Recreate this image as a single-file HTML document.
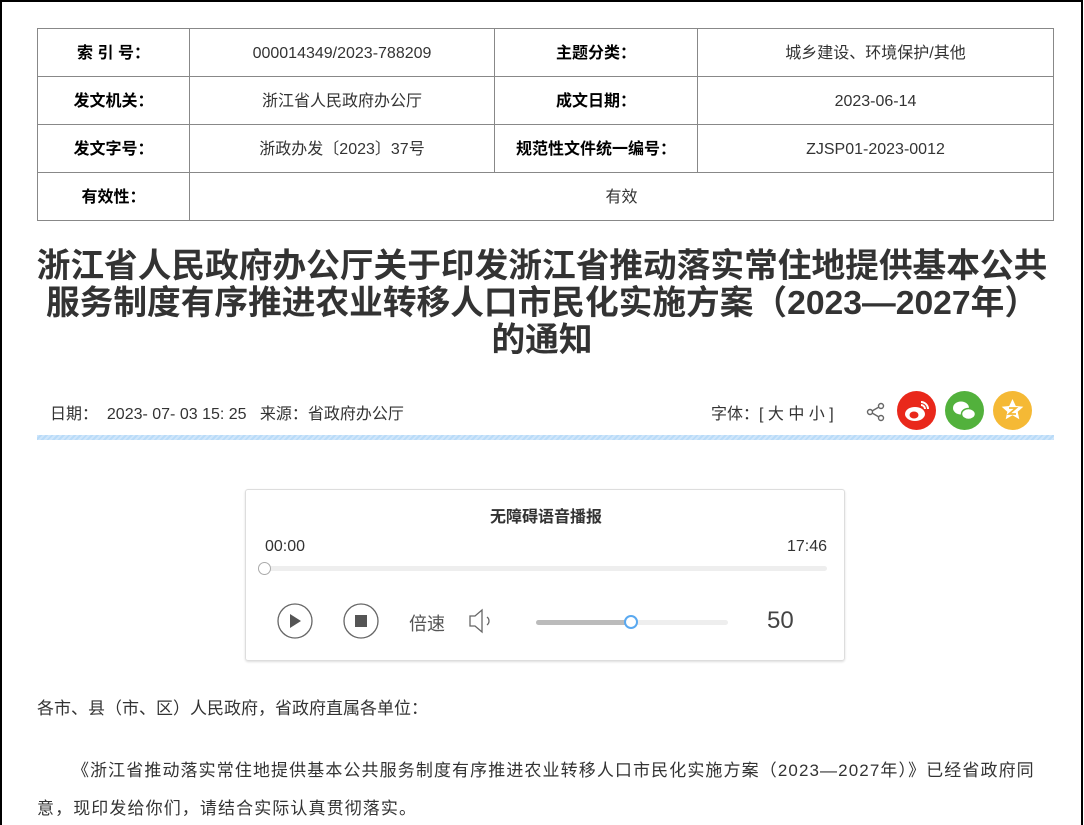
<!DOCTYPE html>
<html><head><meta charset="utf-8"><style>
*{margin:0;padding:0;box-sizing:border-box}
html,body{width:1084px;height:825px;overflow:hidden}
body{background:#fff;font-family:"Liberation Sans","Noto Sans CJK SC",sans-serif;color:#333;position:relative}
.frame{position:absolute;left:0;top:0;width:1083px;height:825px;border:2px solid #000;border-bottom:none}
table{position:absolute;left:37px;top:28px;width:1017px;border-collapse:collapse;font-size:16px}
td{border:1px solid #888;height:48px;text-align:center;vertical-align:middle;line-height:20px;color:#333;padding:3px 0 0}
td.b{font-weight:bold;color:#000}
h1{position:absolute;left:0;width:1084px;top:248px;text-align:center;font-size:33.7px;line-height:37px;font-weight:bold;color:#333;white-space:nowrap}
.meta{position:absolute;top:400px;left:50px;font-size:16px;color:#333}
.font{position:absolute;top:400px;left:711px;font-size:16px;color:#333}
.bar{position:absolute;left:37px;top:435px;width:1017px;height:5px;background:repeating-linear-gradient(135deg,#cfe6fb 0 2px,#b9dbf8 2px 4px)}
.ic{position:absolute;top:391px;width:39px;height:39px;border-radius:50%}
.player{position:absolute;left:245px;top:489px;width:600px;height:172px;border:1px solid #ddd;border-radius:3px;box-shadow:0 1px 2px #ddd}
.p{position:absolute;font-size:16px;color:#333}
.txt{position:absolute;left:37px;font-size:17px;color:#333;white-space:nowrap}
</style></head><body>
<div class="frame"></div>
<table>
<tr><td class="b" style="width:152px">索 引 号：</td><td style="width:305px">000014349/2023-788209</td><td class="b" style="width:203px">主题分类：</td><td>城乡建设、环境保护/其他</td></tr>
<tr><td class="b">发文机关：</td><td>浙江省人民政府办公厅</td><td class="b">成文日期：</td><td>2023-06-14</td></tr>
<tr><td class="b">发文字号：</td><td>浙政办发〔2023〕37号</td><td class="b">规范性文件统一编号：</td><td>ZJSP01-2023-0012</td></tr>
<tr><td class="b">有效性：</td><td colspan="3">有效</td></tr>
</table>
<h1>浙江省人民政府办公厅关于印发浙江省推动落实常住地提供基本公共<br>服务制度有序推进农业转移人口市民化实施方案（2023—2027年）<br>的通知</h1>
<div class="meta">日期：&nbsp; 2023- 07- 03 15: 25&nbsp;&nbsp; 来源：省政府办公厅</div>
<div class="font">字体：[ 大 中 小 ]</div>
<svg style="position:absolute;left:866px;top:402px" width="20" height="20" viewBox="0 0 20 20" fill="none" stroke="#666" stroke-width="1.4"><circle cx="15" cy="4" r="2.5"/><circle cx="4" cy="10" r="2.5"/><circle cx="15" cy="16" r="2.5"/><path d="M6 9 13 5M6 11 13 15"/></svg>
<div class="ic" style="left:897px;background:#e9281b"><svg width="39" height="39" viewBox="0 0 39 39"><ellipse cx="18" cy="23" rx="10" ry="7" fill="#fff"/><ellipse cx="17" cy="24" rx="4.5" ry="3.5" fill="#e9281b"/><path d="M24 11a7 7 0 0 1 7 7M24 14a4 4 0 0 1 4 4" stroke="#fff" stroke-width="2" fill="none"/></svg></div>
<div class="ic" style="left:945px;background:#52b13c"><svg width="39" height="39" viewBox="0 0 39 39" fill="#fff"><ellipse cx="16" cy="17" rx="8" ry="6.5"/><ellipse cx="23.5" cy="23" rx="7" ry="5.5" stroke="#52b13c" stroke-width="1.5"/></svg></div>
<div class="ic" style="left:993px;background:#f5b935"><svg width="39" height="39" viewBox="0 0 39 39"><path d="M19.5 8l3.3 7 7.5.8-5.6 5 1.6 7.4-6.8-3.9-6.8 3.9 1.6-7.4-5.6-5 7.5-.8z" fill="#fff"/><path d="M16 17h7l-7 6h7" stroke="#f5b935" stroke-width="1.8" fill="none"/></svg></div>
<div class="bar"></div>
<div class="player">
<div class="p" style="left:0;width:600px;top:13px;text-align:center;font-weight:bold">无障碍语音播报</div>
<div class="p" style="left:19px;top:48px">00:00</div>
<div class="p" style="right:17px;top:48px">17:46</div>
<div style="position:absolute;left:19px;top:76px;width:562px;height:5px;background:#eee;border-radius:3px"></div>
<div style="position:absolute;left:12px;top:72px;width:13px;height:13px;border:1.5px solid #aaa;border-radius:50%;background:#fff"></div>
<svg style="position:absolute;left:30px;top:112px" width="38" height="38"><circle cx="19" cy="19" r="17" fill="none" stroke="#666" stroke-width="1.3"/><path d="M14 12v14l11-7z" fill="#555"/></svg>
<svg style="position:absolute;left:96px;top:112px" width="38" height="38"><circle cx="19" cy="19" r="17" fill="none" stroke="#666" stroke-width="1.3"/><rect x="13" y="13" width="12" height="12" fill="#555"/></svg>
<div class="p" style="left:163px;top:120px;font-size:18px;color:#555">倍速</div>
<svg style="position:absolute;left:222px;top:116px" width="30" height="30" fill="none" stroke="#666" stroke-width="1.3"><path d="M2 10h5l7-6v22l-7-6H2z"/><path d="M19 11a5 5 0 0 1 0 8"/></svg>
<div style="position:absolute;left:290px;top:130px;width:192px;height:5px;background:#eee;border-radius:3px"></div>
<div style="position:absolute;left:290px;top:130px;width:95px;height:5px;background:#bbb;border-radius:3px"></div>
<div style="position:absolute;left:378px;top:125px;width:14px;height:14px;border:2px solid #5aa9f0;border-radius:50%;background:#fff"></div>
<div class="p" style="left:521px;top:117px;font-size:24px;color:#444">50</div>
</div>
<div class="txt" style="top:694px">各市、县（市、区）人民政府，省政府直属各单位：</div>
<div class="txt" style="top:752px;left:37px;line-height:38px;letter-spacing:1.1px">&nbsp;&nbsp;&nbsp;&nbsp;&nbsp;&nbsp;《浙江省推动落实常住地提供基本公共服务制度有序推进农业转移人口市民化实施方案（2023—2027年）》已经省政府同<br>意，现印发给你们，请结合实际认真贯彻落实。</div>
</body></html>
